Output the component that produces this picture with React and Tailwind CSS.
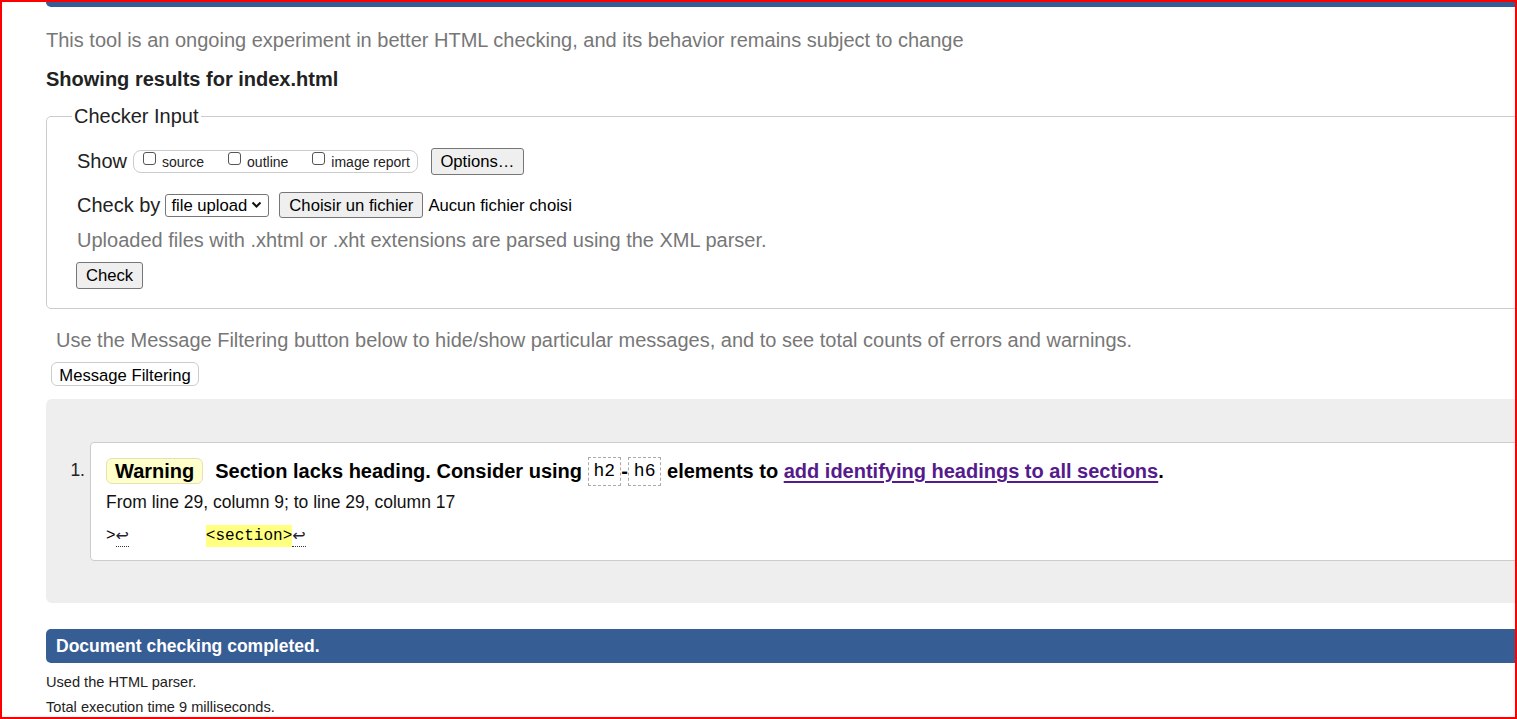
import React from "react";

const sans = "font-['Liberation_Sans',Arial,sans-serif]";
const mono = "font-['Liberation_Mono','DejaVu_Sans_Mono',monospace]";

const Checkbox = ({ label }) => (
  <label className="flex items-center gap-[6px]">
    <span className="w-[13px] h-[13px] mb-[5px] rounded-[3px] border border-[#555] bg-white" />
    <span className="text-[14px] leading-[18px] mt-[2px] text-[#222]">{label}</span>
  </label>
);

const NativeButton = ({ children, className = "" }) => (
  <button
    className={`flex items-center justify-center bg-[#efefef] border border-[#767676] rounded-[3px] text-[16.67px] text-black ${className}`}
  >
    {children}
  </button>
);

const Code = ({ children }) => (
  <code
    className={`inline-flex items-center h-[29px] px-[5px] border border-dashed border-[#aaa] text-[18px] font-normal text-black ${mono}`}
  >
    {children}
  </code>
);

const Return = () => (
  <span className="inline-block h-[22px] border-b border-dotted border-[#333] leading-[22px] font-['DejaVu_Sans',sans-serif] text-[16px] text-[#223]">
    ↩
  </span>
);

const App = () => {
  return (
    <div
      className={`w-[1517px] h-[719px] overflow-hidden border-2 border-[#ff0000] bg-white text-[#222] ${sans}`}
    >
      <div className="pl-[44px] w-[1580px]">
        {/* header remnant */}
        <div className="h-[5px] bg-[#375d95] rounded-bl-[6px]" />

        <p className="mt-[21px] text-[20px] leading-[24px] text-[#777]">
          This tool is an ongoing experiment in better HTML checking, and its
          behavior remains subject to change
        </p>
        <h2 className="mt-[15px] text-[20px] leading-[24px] font-bold text-[#222]">
          Showing results for index.html
        </h2>

        <fieldset className="mt-[13px] border border-[#ccc] rounded-[5px] pl-[30px] pb-[19px]">
          <legend className="ml-[-5px] px-[2px] text-[20px] leading-[24px] text-[#222]">
            Checker Input
          </legend>

          <div className="mt-[19px] h-[28px] flex items-center">
            <span className="text-[20px] text-[#222]">Show</span>
            <div className="ml-[6px] h-[23px] flex items-center gap-[24px] pl-[9px] pr-[7px] border border-[#ccc] rounded-[8px]">
              <Checkbox label="source" />
              <Checkbox label="outline" />
              <Checkbox label="image report" />
            </div>
            <NativeButton className="ml-[13px] w-[93px] h-[27px]">Options…</NativeButton>
          </div>

          <div className="mt-[16px] h-[28px] flex items-center">
            <span className="text-[20px] text-[#222]">Check by</span>
            <div className="ml-[5px] w-[104px] h-[23px] flex items-center justify-between pl-[5px] pr-[6px] border border-[#767676] rounded-[3px] text-[16.67px] text-black">
              <span>file upload</span>
              <svg width="11" height="8" viewBox="0 0 11 8">
                <path d="M1.5 1.5 L5.5 5.5 L9.5 1.5" fill="none" stroke="#111" strokeWidth="2" />
              </svg>
            </div>
            <NativeButton className="ml-[10px] w-[144px] h-[26px]">Choisir un fichier</NativeButton>
            <span className="ml-[5px] text-[16.67px] text-black">Aucun fichier choisi</span>
          </div>

          <p className="mt-[9px] text-[20px] leading-[24px] text-[#777]">
            Uploaded files with .xhtml or .xht extensions are parsed using the XML parser.
          </p>

          <NativeButton className="mt-[10px] ml-[-1px] w-[67px] h-[27px]">Check</NativeButton>
        </fieldset>

        <p className="mt-[19px] ml-[10px] text-[20px] leading-[24px] text-[#777]">
          Use the Message Filtering button below to hide/show particular messages, and to see
          total counts of errors and warnings.
        </p>
        <button className="mt-[10px] ml-[5px] w-[148px] h-[24px] bg-white border border-[#ccc] rounded-[6px] text-[16.67px] text-black">
          Message Filtering
        </button>

        {/* results */}
        <div className="mt-[11px] bg-[#eee] rounded-l-[6px] pt-[43px] pb-[42px]">
          <ol className="flex">
            <span className="w-[44px] pr-[5px] pt-[17px] text-right text-[17.5px] leading-[22px] text-[#222]">
              1.
            </span>
            <li className="flex-1 bg-white border border-[#ccc] rounded-l-[4px] pl-[15px] pt-[13px] pb-[13px]">
              <div className="h-[30px] flex items-center text-[20px] font-bold text-black whitespace-pre">
                <span className="h-[26px] flex items-center px-[8px] bg-[#ffffcc] border border-[#e2e2b4] rounded-[6px]">
                  Warning
                </span>
                <span className="ml-[12px]">Section lacks heading. Consider using </span>
                <Code>h2</Code>
                <span>-</span>
                <Code>h6</Code>
                <span> elements to </span>
                <a className="text-[#551a8b] underline underline-offset-[3px]">
                  add identifying headings to all sections
                </a>
                <span>.</span>
              </div>
              <p className="mt-[6px] text-[17.5px] leading-[21px] text-[#111]">
                From line 29, column 9; to line 29, column 17
              </p>
              <p className={`mt-[12px] h-[22px] flex items-start text-[16px] leading-[22px] text-black whitespace-pre ${mono}`}>
                <span>&gt;</span>
                <Return />
                <span>{"        "}</span>
                <span className="bg-[#ffff80]">&lt;section&gt;</span>
                <Return />
              </p>
            </li>
          </ol>
        </div>

        <div className="mt-[26px] h-[34px] flex items-center pl-[10px] bg-[#375d95] rounded-l-[5px] text-[17.5px] font-bold text-white">
          Document checking completed.
        </div>
        <p className="mt-[10px] text-[14.6px] leading-[18px] text-[#222]">Used the HTML parser.</p>
        <p className="mt-[7px] text-[14.6px] leading-[18px] text-[#222]">
          Total execution time 9 milliseconds.
        </p>
      </div>
    </div>
  );
};

export default App;
